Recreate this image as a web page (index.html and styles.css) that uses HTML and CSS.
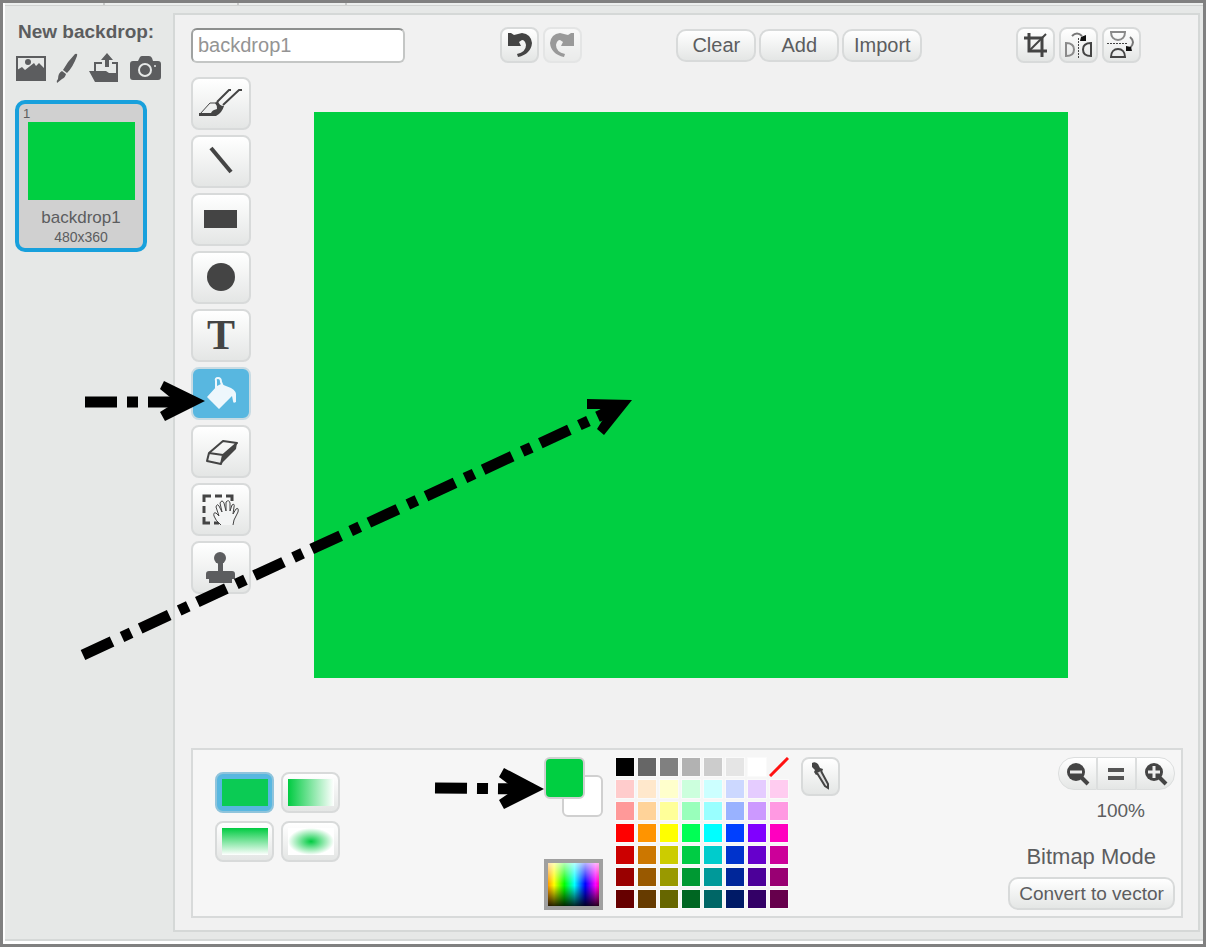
FILE: index.html
```html
<!DOCTYPE html>
<html lang="en">
<head>
<meta charset="utf-8">
<title>Backdrop editor</title>
<link rel="stylesheet" href="styles.css">
</head>
<body>
<div class="frame">
  <div class="tab-strip"><span class="tab tab-a"></span><span class="tab tab-b"></span><span class="tab tab-c"></span></div>
  <div class="workspace">
    <aside class="sidebar">
      <h1 class="sidebar-title">New backdrop:</h1>
      <div class="sources">
        <button class="source" aria-label="Choose from library"><svg width="30" height="25" viewBox="0 0 30 25"><path d="M1 1H29V24H1Z" fill="none" stroke="#5c5d5f" stroke-width="2"/><path d="M1 14L6 11L9 14L18 7L20 10L23 7L29 13V24H1Z" fill="#5c5d5f"/><circle cx="12" cy="6" r="3" fill="#5c5d5f"/></svg></button>
        <button class="source" aria-label="Paint new backdrop"><svg width="22" height="30" viewBox="0 0 22 30"><path d="M19 1Q22 0 21 3Q17 14 11 20L7 17Q12 8 19 1ZM6 18L10 21Q9 25 6 26L1 30Q0 28 2 26Q2 20 6 18Z" fill="#5c5d5f"/></svg></button>
        <button class="source" aria-label="Upload backdrop"><svg width="31" height="30" viewBox="0 0 31 30"><path d="M0 18H17L20 20H24L29 29H6Z" fill="#5c5d5f"/><path d="M6 18V10H13M23 10H28V27" fill="none" stroke="#5c5d5f" stroke-width="2"/><path d="M18 0L24 7H20V14H16V7H12Z" fill="#5c5d5f"/><path d="M20 20H29V29H8Z" fill="#5c5d5f"/></svg></button>
        <button class="source" aria-label="New backdrop from camera"><svg width="31" height="25" viewBox="0 0 31 25"><path d="M3 5H8L10 1Q11 0 12 0H19Q21 0 22 2L23 5H28Q31 5 31 8V21Q31 24 28 24H3Q0 24 0 21V8Q0 5 3 5Z" fill="#5c5d5f"/><circle cx="15" cy="14" r="6" fill="none" stroke="#e6e8e7" stroke-width="2"/><circle cx="25" cy="10" r="1" fill="#e6e8e7"/></svg></button>
      </div>
      <button class="card">
        <span class="card-index">1</span>
        <span class="card-thumb"></span>
        <span class="card-name">backdrop1</span>
        <span class="card-size">480x360</span>
      </button>
    </aside>

    <main class="editor">
      <div class="topbar">
        <input class="name" type="text" value="backdrop1" aria-label="Backdrop name">
        <div class="group">
          <button class="btn icon-btn" aria-label="Undo"><svg width="35" height="32" viewBox="2 2 35 32"><path d="M8 6H11L14 8L22 6Q31 7 32 16Q31 27 18 30L17 27Q26 25 26 18Q25 13 22 13L19 15L21 19L8 19Z" fill="#444"/></svg></button>
          <button class="btn icon-btn faded" aria-label="Redo" disabled><svg width="35" height="32" viewBox="2 2 35 32"><path d="M31 6H28L25 8L17 6Q8 7 7 16Q8 27 21 30L22 27Q13 25 13 18Q14 13 17 13L20 15L18 19L31 19Z" fill="#444"/></svg></button>
        </div>
        <div class="group">
          <button class="btn text-btn">Clear</button>
          <button class="btn text-btn">Add</button>
          <button class="btn text-btn">Import</button>
        </div>
        <div class="group">
          <button class="btn icon-btn" aria-label="Crop"><svg width="35" height="32" viewBox="2 2 35 32"><path d="M13 6V24H31M8 11H26V30" fill="none" stroke="#444" stroke-width="3"/><path d="M13 24L30 7" stroke="#444" stroke-width="2"/></svg></button>
          <button class="btn icon-btn" aria-label="Flip left-right"><svg width="35" height="32" viewBox="2 2 35 32"><path d="M7 16C12 16 15 18 15 22.500C15 27 12 29 7 29Z" fill="none" stroke="#8a8a8a" stroke-width="2"/><path d="M32 16C27 16 24 18 24 22.500C24 27 27 29 32 29Z" fill="none" stroke="#444" stroke-width="2"/><path d="M19.500 11V32" stroke="#444" stroke-width="1" stroke-dasharray="2 1"/><path d="M13 9Q18 4 23 9" fill="none" stroke="#777" stroke-width="2"/><path d="M27 8V14H21L22 10Z" fill="#111"/></svg></button>
          <button class="btn icon-btn" aria-label="Flip up-down"><svg width="35" height="32" viewBox="2 2 35 32"><path d="M9 5H23C23 10 20 13 16 13C12 13 9 10 9 5Z" fill="none" stroke="#8a8a8a" stroke-width="2"/><path d="M9 30H23C23 25 20 22 16 22C12 22 9 25 9 30Z" fill="none" stroke="#444" stroke-width="2"/><path d="M5 16.500H25" stroke="#444" stroke-width="1" stroke-dasharray="2 1"/><path d="M28 10Q34 15 28 21" fill="none" stroke="#777" stroke-width="2"/><path d="M24 19L29 20L30 24H24Z" fill="#111"/></svg></button>
        </div>
      </div>

      <div class="stage">
        <div class="tools">
          <button class="btn tool" aria-label="Brush"><svg width="56" height="49" viewBox="2 2 56 49"><path d="M9 37L19 26H25L30 30Q26 37 22 38Z" fill="none" stroke="#444" stroke-width="1"/><path d="M8 36H20Q21 33 26 32Q26 28 24 26L27 24Q28 29 33 29Q31 36 25 39H8Z" fill="#444"/><path d="M26 25L38 13H40M32 28L48 13H51" fill="none" stroke="#444" stroke-width="2"/></svg></button>
          <button class="btn tool" aria-label="Line"><svg width="56" height="49" viewBox="2 2 56 49"><path d="M20 13L40 37" stroke="#444" stroke-width="4"/></svg></button>
          <button class="btn tool" aria-label="Rectangle"><svg width="56" height="49" viewBox="2 2 56 49"><path d="M13 17H46V35H13Z" fill="#444"/></svg></button>
          <button class="btn tool" aria-label="Ellipse"><svg width="56" height="49" viewBox="2 2 56 49"><circle cx="30" cy="26" r="14" fill="#444"/></svg></button>
          <button class="btn tool letter" aria-label="Text">T</button>
          <button class="btn tool active" aria-label="Fill with color"><svg width="56" height="49" viewBox="2 2 56 49"><path d="M16 30L26 19L30 17L40 21Q46 24 45 30V35Q42 37 42 34L41 29L28 42Z" fill="#eef7fc"/><path d="M25 21V14Q24 11 27 11Q30 11 30 15L33 22" fill="none" stroke="#eef7fc" stroke-width="2"/></svg></button>
          <button class="btn tool" aria-label="Erase"><svg width="56" height="49" viewBox="2 2 56 49"><path d="M32 30L46 18L45 24L30 39Z" fill="#444"/><path d="M32 16L46 18L32 30L18 28ZM18 28L16 36L30 39L32 30" fill="none" stroke="#444" stroke-width="2" stroke-linejoin="round"/></svg></button>
          <button class="btn tool" aria-label="Select"><svg width="56" height="49" viewBox="2 2 56 49"><path d="M13 19V13H20M24 13H31M35 13H41V18M13 23V30M13 34V40H19M23 40H28" fill="none" stroke="#444" stroke-width="3"/><path d="M30 42Q24 37 23 33Q22 29 25 30L28 33L25 24Q26 20 28 23L31 29L29 20Q31 16 33 20L35 28L35 19Q38 16 39 20L39 28L41 22Q44 20 43 24L42 31L45 26Q48 24 47 29L43 37L42 42" fill="#f3f4f4" stroke="#444" stroke-width="1"/></svg></button>
          <button class="btn tool" aria-label="Select and duplicate"><svg width="56" height="49" viewBox="2 2 56 49"><circle cx="29" cy="17" r="6" fill="#5c5d5f"/><path d="M27 20H32V30H41Q44 30 44 33V38H41V42H18V38H15V33Q15 30 18 30H27Z" fill="#5c5d5f"/></svg></button>
        </div>
        <div class="canvas"></div>
      </div>

      <section class="options">
        <div class="fills">
          <button class="btn fill active" aria-label="Solid fill"><span class="sample solid"></span></button>
          <button class="btn fill" aria-label="Horizontal gradient"><span class="sample horizontal"></span></button>
          <button class="btn fill" aria-label="Vertical gradient"><span class="sample vertical"></span></button>
          <button class="btn fill" aria-label="Radial gradient"><span class="sample radial"></span></button>
        </div>
        <div class="colors">
          <div class="current">
            <div class="pair"><button class="chip back" aria-label="Secondary color"></button><button class="chip front" aria-label="Primary color"></button></div>
            <button class="spectrum" aria-label="Color spectrum"></button>
          </div>
          <div class="palette" id="palette"></div>
          <button class="btn dropper" aria-label="Pick up color"><svg width="35" height="35" viewBox="2 2 35 35"><path d="M11 6Q14 4 17 7L19 11L22 12L21 15L15 18L13 15L14 13L11 10Z" fill="#444"/><path d="M16 16L24 29L27 31V27L20 14" fill="#ddd" stroke="#444" stroke-width="2"/></svg></button>
        </div>
        <div class="view">
          <div class="zoom">
            <button class="zoom-btn" aria-label="Zoom out"><svg width="26" height="26" viewBox="0 0 26 26"><path d="M16 16L23 23" stroke="#444" stroke-width="4"/><circle cx="11" cy="11" r="9" fill="#444"/><path d="M5 11H17" stroke="#eee" stroke-width="3"/></svg></button>
            <button class="zoom-btn" aria-label="Reset zoom"><svg width="26" height="26" viewBox="0 0 26 26"><path d="M4 9H20M4 17H20" stroke="#555" stroke-width="4"/></svg></button>
            <button class="zoom-btn" aria-label="Zoom in"><svg width="26" height="26" viewBox="0 0 26 26"><path d="M16 16L23 23" stroke="#444" stroke-width="4"/><circle cx="11" cy="11" r="9" fill="#444"/><path d="M5 11H17M11 5V17" stroke="#eee" stroke-width="3"/></svg></button>
          </div>
          <div class="percent">100%</div>
          <div class="mode">Bitmap Mode</div>
          <button class="btn convert">Convert to vector</button>
        </div>
      </section>
    </main>
  </div>
  <svg class="arrows" width="1206" height="947" viewBox="0 0 1206 947" aria-hidden="true">
    <g fill="none" stroke="#000" stroke-width="11">
      <path d="M85 402H184" stroke-dasharray="32 10 11 10"/>
      <path d="M435 788L523 789" stroke-dasharray="32 10 11 10"/>
      <path d="M83 655L612 410" stroke-dasharray="32 11 10 10"/>
    </g>
    <path d="M164 381L205 401L165 421L160 412L176 402L160 389Z"/>
    <path d="M504 768L544 789L504 809L499 800L515 789L499 777Z"/>
    <path d="M587 399L632 400L604 435L597 429L605 416L600 409L587 409Z"/>
  </svg>
</div>
<script src="palette.js"></script>
</body>
</html>
```
FILE: styles.css
```css
* { box-sizing: border-box; }
body { margin: 0; font-family: "Liberation Sans", Arial, sans-serif; color: #5c5d5f; }
button, input { font: inherit; color: inherit; margin: 0; padding: 0; }
svg { display: block; }

.frame { position: relative; display: flex; flex-direction: column; min-height: 100vh; border: 3px solid #808080; background: #fff; }
.arrows { position: absolute; left: -3px; top: -3px; pointer-events: none; }
.tab-strip { display: flex; height: 3px; margin-left: 2px; border-bottom: 1px solid #d0d2d1; background: #eceeed; }
.tab { border-right: 2px solid #c8cac9; }
.tab-a { width: 100px; }
.tab-b { width: 134px; }
.tab-c { width: 108px; }
.workspace { display: flex; flex: 1; margin: 0 0 3px 2px; padding: 7px 3px 7px 0; border-bottom: 2px solid #d5d8d7; background: #e6e8e7; }

.sidebar { width: 168px; padding: 8px 12px 0 10px; }
.sidebar-title { margin: 0 0 0 3px; font-size: 19px; line-height: 22px; white-space: nowrap; }
.sources { display: flex; justify-content: space-between; align-items: center; height: 34px; margin: 8px 0 15px 1px; }
.source { border: 0; background: none; }
.card { display: flex; flex-direction: column; align-items: center; width: 132px; height: 152px; padding: 2px 0; border: 4px solid #18a0dc; border-radius: 10px; background: #d0d0d0; }
.card-index { align-self: flex-start; margin-left: 4px; font-size: 13px; line-height: 16px; }
.card-thumb { width: 107px; height: 80px; background: #00cf41; }
.card-name { margin-top: 8px; font-size: 17px; line-height: 20px; }
.card-size { font-size: 14px; line-height: 18px; }

.editor { flex: 1; display: flex; flex-direction: column; padding: 12px 15px 12px 16px; border: 2px solid #d5d8d7; background: #f1f1f1; }
.topbar { display: flex; align-items: center; justify-content: space-between; padding-right: 42px; }
.group { display: flex; align-items: center; gap: 4px; }
.name { width: 214px; height: 35px; padding: 0 5px; border: 2px solid #c4c6c5; border-top-color: #8d8f8e; border-left-color: #a0a2a1; border-radius: 6px; background: #fff; color: #949494; font-size: 20px; }
.btn { display: flex; align-items: center; justify-content: center; border: 2px solid #d8dada; border-radius: 8px; background: linear-gradient(#fff, #e4e6e5); }
.icon-btn { width: 39px; height: 36px; }
.faded { opacity: .5; }
.text-btn { width: 80px; height: 33px; margin-right: -1px; border-radius: 10px; font-size: 20px; }

.stage { display: flex; align-items: flex-start; margin-top: 14px; }
.tools { display: flex; flex-direction: column; gap: 5px; }
.tool { width: 60px; height: 53px; }
.letter { padding-bottom: 1px; color: #444; font: bold 42px "Liberation Serif", "Times New Roman", serif; }
.active { border-color: #c8dbe3; background: #58b7e0; }
.canvas { flex: 1; aspect-ratio: 4 / 3; margin: 35px 115px 0 63px; background: #00cf41; }

.options { display: flex; justify-content: space-between; margin-top: auto; padding: 7px 6px 6px 22px; border: 2px solid #d8dada; background: #f6f6f6; }
.fills { display: grid; grid-template-columns: 59px 59px; gap: 8px 7px; align-content: start; padding-top: 15px; margin-right: 36px; }
.fill { height: 41px; }
.fill.active { border-color: #8fc4dc; }
.sample { width: 46px; height: 27px; }
.solid { background: #0bcb54; }
.horizontal { background: linear-gradient(90deg, #00cb41, #fff); }
.vertical { background: linear-gradient(#00cb41, #fff); }
.radial { background: radial-gradient(closest-side, #00cb41, #fff); }
.colors { display: flex; align-items: flex-start; gap: 12px; }
.current { display: flex; flex-direction: column; justify-content: space-between; align-self: stretch; width: 59px; }
.pair { position: relative; height: 60px; }
.chip { position: absolute; width: 41px; height: 42px; border: 2px solid #d0d0d0; border-radius: 6px; }
.back { right: 0; bottom: 0; background: #fff; }
.front { left: 0; top: 0; background: #00cf41; }
.spectrum { height: 51px; border: 4px solid #a0a0a0; background: linear-gradient(rgba(255, 255, 255, .7), rgba(255, 255, 255, 0) 48%, rgba(0, 0, 0, 0) 52%, rgba(0, 0, 0, .85)), linear-gradient(90deg, #ff9800, #ff0 12%, #0f0 32%, #0ff 52%, #00f 73%, #f0f 93%, #f0a); }
.palette { display: grid; grid-template-columns: repeat(8, 20px); grid-auto-rows: 20px; gap: 2px; padding-bottom: 1px; }
.swatch { border: 1px solid #fafafa; background-clip: padding-box; }
.clear-swatch { border: 0; background: none; }
.dropper { width: 39px; height: 39px; }
.view { display: flex; flex-direction: column; align-items: flex-end; }
.zoom { display: flex; }
.zoom-btn { display: flex; align-items: center; justify-content: center; width: 39px; height: 33px; border: 1px solid #dcdede; background: linear-gradient(#fff, #e4e6e5); }
.zoom-btn:first-child { border-radius: 16px 0 0 16px; }
.zoom-btn:last-child { border-radius: 0 16px 16px 0; }
.percent { margin: 9px 30px 0 0; font-size: 19px; line-height: 24px; }
.mode { margin: 21px 19px 7px 0; font-size: 22px; line-height: 26px; }
.convert { width: 167px; height: 33px; border-radius: 10px; font-size: 19px; white-space: nowrap; }
```
FILE: palette.js
```js
const rows = [
  ["#000000", "#666666", "#808080", "#b2b2b2", "#cccccc", "#e5e5e5", "#ffffff", null],
  ["#ffcccc", "#ffe8cc", "#ffffcc", "#ccffdd", "#ccffff", "#ccd8ff", "#e5ccff", "#ffccf0"],
  ["#ff9999", "#ffd399", "#ffff99", "#99ffbb", "#99ffff", "#99b2ff", "#cc99ff", "#ff99e2"],
  ["#ff0000", "#ff9400", "#ffff00", "#00ff55", "#00ffff", "#0040ff", "#8000ff", "#ff00bf"],
  ["#cc0000", "#cc7700", "#cccc00", "#00cc44", "#00cccc", "#0033cc", "#6600cc", "#cc0099"],
  ["#990000", "#995900", "#999900", "#009933", "#009999", "#002699", "#4c0099", "#990073"],
  ["#660000", "#663b00", "#666600", "#006622", "#006666", "#001a66", "#330066", "#66004c"]
];
const palette = document.getElementById("palette");
for (const color of rows.flat()) {
  const swatch = document.createElement("button");
  swatch.className = "swatch";
  if (color) {
    swatch.style.backgroundColor = color;
    swatch.setAttribute("aria-label", color);
  } else {
    swatch.classList.add("clear-swatch");
    swatch.setAttribute("aria-label", "No color");
    swatch.innerHTML = '<svg width="20" height="20" viewBox="0 0 20 20"><path d="M1 19L19 1" stroke="#f11" stroke-width="3"/></svg>';
  }
  palette.append(swatch);
}
```
